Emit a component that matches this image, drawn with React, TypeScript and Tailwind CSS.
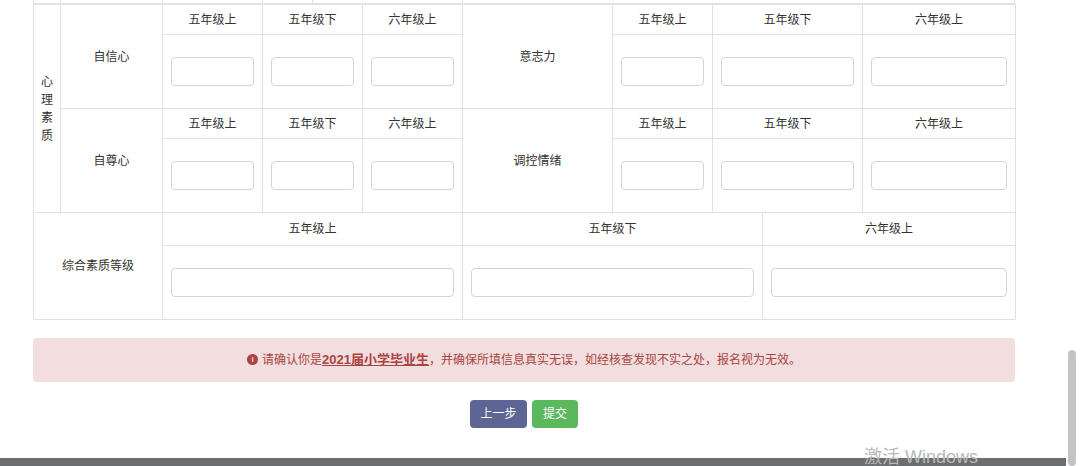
const F = { fontFamily: '"Liberation Sans", "Noto Sans CJK SC", sans-serif' };

function Inp({ w }: { w: string }) {
  return <div className={`mx-auto h-[29px] ${w} rounded-[4px] border border-[#d4d4d4] bg-white`} />;
}

const grades = ["五年级上", "五年级下", "六年级上"];

function Block({ left, right }: { left: string; right: string }) {
  return (
    <>
      <tr className="h-[30px]">
        <td rowSpan={2} className="border border-[#e2e2e2] text-center">{left}</td>
        {grades.map((g) => (
          <td key={g} className="border border-[#e2e2e2] text-center">{g}</td>
        ))}
        <td rowSpan={2} className="border border-[#e2e2e2] text-center">{right}</td>
        {grades.map((g) => (
          <td key={"r" + g} className="border border-[#e2e2e2] text-center">{g}</td>
        ))}
      </tr>
      <tr className="h-[74px]">
        {[0, 1, 2].map((i) => (
          <td key={i} className="border border-[#e2e2e2] px-2"><Inp w="w-full" /></td>
        ))}
        {[0, 1, 2].map((i) => (
          <td key={"b" + i} className="border border-[#e2e2e2] px-2"><Inp w="w-full" /></td>
        ))}
      </tr>
    </>
  );
}

export default function App() {
  return (
    <div style={F} className="relative h-[466px] w-[1080px] overflow-hidden bg-white text-[12px] text-[#333]">
      <div className="ml-[33px] w-[982px]">
        <div className="flex h-[4px] border-x border-b border-[#e2e2e2]">
          <div className="w-[27px] border-r border-[#e2e2e2]" />
          <div className="w-[102px] border-r border-[#e2e2e2]" />
          <div className="w-[100px] border-r border-[#e2e2e2]" />
          <div className="w-[50px] border-r border-[#e2e2e2]" />
          <div className="w-[150px] border-r border-[#e2e2e2]" />
        </div>
        <table className="w-[982px] table-fixed border-collapse">
          <colgroup>
            <col className="w-[27px]" />
            <col className="w-[102px]" />
            <col className="w-[100px]" />
            <col className="w-[100px]" />
            <col className="w-[100px]" />
            <col className="w-[150px]" />
            <col className="w-[100px]" />
            <col className="w-[150px]" />
            <col className="w-[153px]" />
          </colgroup>
          <tbody>
            <tr className="h-[30px]">
              <td rowSpan={4} className="border border-[#e2e2e2] text-center leading-[18px]">
                心<br />理<br />素<br />质
              </td>
              <td rowSpan={2} className="border border-[#e2e2e2] text-center">自信心</td>
              {grades.map((g) => (
                <td key={g} className="border border-[#e2e2e2] text-center">{g}</td>
              ))}
              <td rowSpan={2} className="border border-[#e2e2e2] text-center">意志力</td>
              {grades.map((g) => (
                <td key={"r" + g} className="border border-[#e2e2e2] text-center">{g}</td>
              ))}
            </tr>
            <tr className="h-[74px]">
              {[0, 1, 2, 3, 4, 5].map((i) => (
                <td key={i} className="border border-[#e2e2e2] px-2"><Inp w="w-full" /></td>
              ))}
            </tr>
            <Block left="自尊心" right="调控情绪" />
          </tbody>
        </table>
        <table className="w-[982px] table-fixed border-collapse">
          <colgroup>
            <col className="w-[129px]" />
            <col className="w-[300px]" />
            <col className="w-[300px]" />
            <col className="w-[253px]" />
          </colgroup>
          <tbody>
            <tr className="h-[32px]">
              <td rowSpan={2} className="border border-t-0 border-[#e2e2e2] text-center">综合素质等级</td>
              {grades.map((g) => (
                <td key={g} className="border border-t-0 border-[#e2e2e2] text-center">{g}</td>
              ))}
            </tr>
            <tr className="h-[74px]">
              {[0, 1, 2].map((i) => (
                <td key={i} className="border border-[#e2e2e2] px-2"><Inp w="w-full" /></td>
              ))}
            </tr>
          </tbody>
        </table>
        <div className="mt-[18px] flex h-[44px] items-center justify-center rounded-[4px] bg-[#f2dede] text-[12px] text-[#a94442]">
          <span className="mr-1 flex h-[11px] w-[11px] items-center justify-center rounded-full bg-[#a94442] text-[8px] font-bold text-[#f2dede]">i</span>
          请确认你是<b className="text-[13px] underline">2021届小学毕业生</b>，并确保所填信息真实无误，如经核查发现不实之处，报名视为无效。
        </div>
        <div className="mt-[18px] flex justify-center gap-[5px]">
          <button className="h-[28px] w-[57px] rounded-[4px] bg-[#5c6593] text-[12px] text-white">上一步</button>
          <button className="h-[28px] w-[46px] rounded-[4px] bg-[#5cb85c] text-[12px] text-white">提交</button>
        </div>
      </div>
      <div className="absolute bottom-0 left-0 h-[8px] w-[1066px] bg-[#6b6e70]" />
      <div className="absolute right-[4px] top-[350px] h-[116px] w-[8px] rounded-full bg-[#c4c4c7]" />
      <div className="absolute left-[864px] top-[444px] text-[18px] text-[#b8b8b8]">激活 Windows</div>
    </div>
  );
}
